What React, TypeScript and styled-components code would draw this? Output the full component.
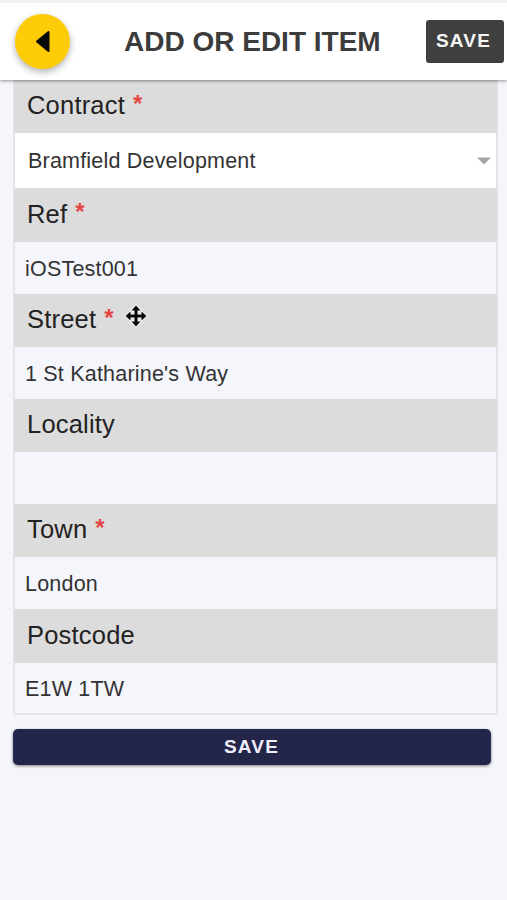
import React from "react";
import styled, { createGlobalStyle } from "styled-components";

const GlobalStyle = createGlobalStyle`
  * { box-sizing: border-box; }
  body {
    margin: 0;
    background: #f4f6fb;
    font-family: "Liberation Sans", Arial, sans-serif;
  }
`;

const Page = styled.div`
  width: 507px;
  height: 900px;
  overflow: hidden;
`;

const Header = styled.header`
  position: relative;
  z-index: 1;
  display: flex;
  align-items: center;
  height: 80px;
  padding: 0 3.5px 0 15px;
  background: #fff;
  border-top: 3px solid #f1f1f1;
  box-shadow: 0 1px 3px rgba(0, 0, 0, 0.42);
`;

const BackButton = styled.button`
  display: flex;
  flex: none;
  width: 55px;
  height: 55px;
  padding: 0;
  border: 0;
  border-radius: 50%;
  background: #fecb07;
  box-shadow: 0 3px 7px rgba(0, 0, 0, 0.3);
`;

const Title = styled.h1`
  flex: 1;
  margin: 0 0 0 54px;
  color: #3c3c3c;
  font-size: 28px;
  line-height: 32px;
  white-space: nowrap;
`;

const HeaderSave = styled.button`
  width: 78px;
  height: 43px;
  padding: 0 2px 2px 0;
  border: 0;
  border-radius: 3px;
  background: #404040;
  color: #f5f5f5;
  font: bold 19px "Liberation Sans", Arial, sans-serif;
  letter-spacing: 1.2px;
`;

const Form = styled.form`
  margin: 0 9px 0 13px;
`;

const Fields = styled.div`
  border: solid #e4e5e8;
  border-width: 0 2px 2px;
  background: #f4f6fb;
`;

const Label = styled.label<{ $height: number }>`
  display: flex;
  align-items: center;
  height: ${(p) => p.$height}px;
  margin: 0 -1px;
  padding: 0 0 2px 13px;
  background: #dcdcdc;
  color: #222;
  font-size: 25.5px;
  letter-spacing: 0.2px;
`;

const Required = styled.span`
  margin: -4px 0 0 8px;
  color: #e64545;
  font-size: 24px;
  font-weight: bold;
`;

const Value = styled.div<{ $height: number; $select?: boolean }>`
  display: flex;
  align-items: center;
  justify-content: space-between;
  height: ${(p) => p.$height}px;
  padding: ${(p) => (p.$select ? "1px 4px 0 13px" : "2px 4px 0 10px")};
  background: ${(p) => (p.$select ? "#fff" : "#f4f6fb")};
  color: #333;
  font-size: 21.5px;
  letter-spacing: 0.2px;
`;

const MoveIcon = styled.svg`
  margin: -7px 0 0 10px;
`;

const Submit = styled.button`
  display: block;
  width: 478px;
  height: 36px;
  margin-top: 14px;
  padding: 0 1px 1px 0;
  border: 0;
  border-radius: 5px;
  background: #232649;
  box-shadow: 0 1px 3px rgba(0, 0, 0, 0.5);
  color: #eeeefa;
  font: bold 19px "Liberation Sans", Arial, sans-serif;
  letter-spacing: 1.2px;
`;

type Field = {
  label: string;
  value: string;
  labelHeight: number;
  valueHeight: number;
  required?: boolean;
  select?: boolean;
  cursor?: boolean;
};

const fields: Field[] = [
  { label: "Contract", value: "Bramfield Development", labelHeight: 53, valueHeight: 55, required: true, select: true },
  { label: "Ref", value: "iOSTest001", labelHeight: 54, valueHeight: 52, required: true },
  { label: "Street", value: "1 St Katharine's Way", labelHeight: 53, valueHeight: 52, required: true, cursor: true },
  { label: "Locality", value: "", labelHeight: 53, valueHeight: 52 },
  { label: "Town", value: "London", labelHeight: 53, valueHeight: 52, required: true },
  { label: "Postcode", value: "E1W 1TW", labelHeight: 54, valueHeight: 50 },
];

export default function App() {
  return (
    <Page>
      <GlobalStyle />
      <Header>
        <BackButton type="button" aria-label="Back">
          <svg width="55" height="55" viewBox="0 0 55 55">
            <path d="M22 27.5 L33.5 18 V37 Z" fill="#080808" stroke="#080808" strokeWidth="2" strokeLinejoin="round" />
          </svg>
        </BackButton>
        <Title>ADD OR EDIT ITEM</Title>
        <HeaderSave type="button">SAVE</HeaderSave>
      </Header>
      <Form>
        <Fields>
          {fields.map((f) => (
            <React.Fragment key={f.label}>
              <Label $height={f.labelHeight}>
                {f.label}
                {f.required && <Required>*</Required>}
                {f.cursor && (
                  <MoveIcon width="24" height="24" viewBox="0 0 24 24">
                    <path
                      d="M12 1.5 L16.5 6.5 H13.5 V10.5 H17.5 V7.5 L22.5 12 L17.5 16.5 V13.5 H13.5 V17.5 H16.5 L12 22.5 L7.5 17.5 H10.5 V13.5 H6.5 V16.5 L1.5 12 L6.5 7.5 V10.5 H10.5 V6.5 H7.5 Z"
                      fill="#080808"
                      stroke="#f5f5f5"
                      strokeWidth="2"
                      paintOrder="stroke"
                      strokeLinejoin="round"
                    />
                  </MoveIcon>
                )}
              </Label>
              <Value $height={f.valueHeight} $select={f.select}>
                {f.value}
                {f.select && (
                  <svg width="16" height="8" viewBox="0 0 16 8">
                    <path d="M1 0.5 H15 L8 7.5 Z" fill="#a6a6a6" />
                  </svg>
                )}
              </Value>
            </React.Fragment>
          ))}
        </Fields>
        <Submit type="button">SAVE</Submit>
      </Form>
    </Page>
  );
}
